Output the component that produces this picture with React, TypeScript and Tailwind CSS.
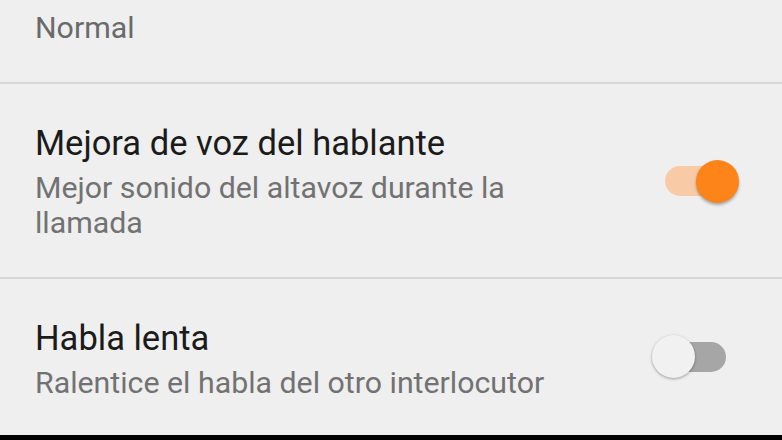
import React from "react";

function Toggle({ on }: { on: boolean }) {
  return (
    <div className="relative w-[73px] h-[44px] shrink-0">
      <div
        className={
          on
            ? "absolute left-0 top-[7px] w-[70px] h-[30px] rounded-full bg-[#f8cba6]"
            : "absolute left-0 top-[6px] w-[61px] h-[30px] rounded-full bg-[#a6a6a6]"
        }
      />
      <div
        className={
          on
            ? "absolute left-[31px] top-[1px] w-[43px] h-[43px] rounded-full bg-[#fd8419] shadow-[0_2px_3px_rgba(0,0,0,0.3)]"
            : "absolute left-[-13px] top-[-1px] w-[43px] h-[43px] rounded-full bg-[#f1f1f1] shadow-[0_1px_3px_rgba(0,0,0,0.35)]"
        }
      />
    </div>
  );
}

function Row({
  title,
  sub,
  on,
}: {
  title: string;
  sub: string;
  on: boolean;
}) {
  return (
    <div className="flex items-center pl-[35px] pr-[44px]">
      <div className="flex-1 min-w-0 max-w-[545px]">
        <div className="text-[34.5px] leading-[44px] text-[#1b1b1b]">{title}</div>
        <div className="mt-[5px] text-[30.3px] leading-[35px] text-[#727272]">{sub}</div>
      </div>
      <div className="ml-auto">
        <Toggle on={on} />
      </div>
    </div>
  );
}

export default function App() {
  return (
    <div
      className="w-[782px] h-[440px] bg-[#efefef] flex flex-col overflow-hidden"
      style={{ fontFamily: "Roboto, 'Noto Sans', sans-serif" }}
    >
      <div className="h-[82px] pl-[35px] pt-[10px] text-[30.3px] leading-[35px] text-[#6a6a6a]">
        Normal
      </div>
      <div className="h-[2px] bg-[#d6d6d6]" />
      <div className="h-[193px] pt-[37px]">
        <Row
          title="Mejora de voz del hablante"
          sub="Mejor sonido del altavoz durante la llamada"
          on
        />
      </div>
      <div className="h-[2px] bg-[#d6d6d6]" />
      <div className="flex-1 pt-[37px]">
        <Row title="Habla lenta" sub="Ralentice el habla del otro interlocutor" on={false} />
      </div>
      <div className="h-[5px] bg-black" />
    </div>
  );
}
